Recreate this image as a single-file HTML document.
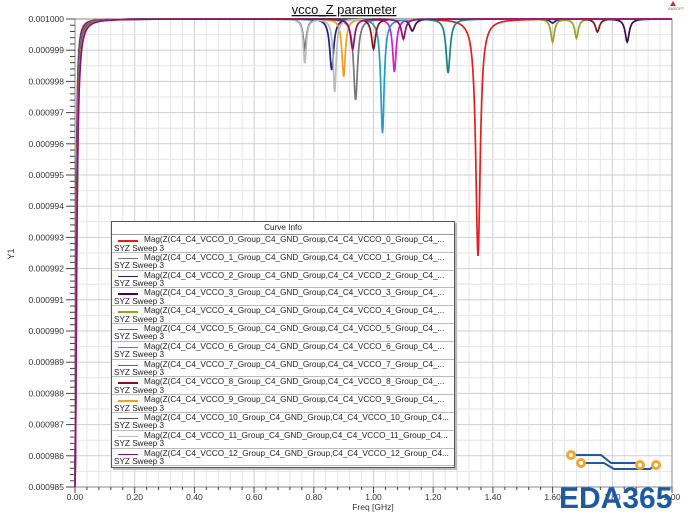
<!DOCTYPE html>
<html><head><meta charset="utf-8"><style>
body{margin:0;background:#fff;width:688px;height:516px;overflow:hidden;font-family:"Liberation Sans",Arial,sans-serif}
svg text{font-family:"Liberation Sans",Arial,sans-serif}
#leg{position:absolute;left:111px;top:221px;width:342px;height:245px;background:#fff;border:1px solid #555;box-shadow:2px 2px 0 #bbb;font-size:8.2px;color:#222}
#leg .t{text-align:center;height:12px;line-height:12px;border-bottom:1px solid #999}
#leg .r{height:17.8px;border-bottom:1px solid #bbb;position:relative;line-height:8.5px;padding-left:2px;padding-top:1px;box-sizing:border-box}
#leg .r i{position:absolute;left:6px;top:5px;width:20px;height:1.5px}
#leg .r span{margin-left:30px;display:block;white-space:nowrap}
</style></head><body>
<svg id="s" width="688" height="516" style="position:absolute;left:0;top:0">
<g id="grid"></g>
<text x="344" y="14" text-anchor="middle" font-size="13" fill="#111" text-decoration="underline">vcco_Z parameter</text>
<text x="668" y="10" font-size="4" fill="#666">ANSOFT</text>
<polygon points="670,6 673,1 676,6" fill="#b33"/>
<text x="14" y="254" font-size="9" fill="#333" transform="rotate(-90 14 254)" text-anchor="middle">Y1</text>
<text x="373" y="510" font-size="8.5" fill="#333" text-anchor="middle">Freq [GHz]</text>
<g id="curves" fill="none" stroke-width="1.7"></g>
</svg>
<div id="leg"><div class="t">Curve Info</div></div>
<svg width="688" height="516" style="position:absolute;left:0;top:0">
<g stroke="#1d5aa0" stroke-width="2" fill="none">
<polyline points="571,455 601,455 611,463 641,463"/>
<polyline points="581,463 604,463 614,469 650,469 655,465"/>
</g>
<g fill="#f4a532"><circle cx="571" cy="455" r="5"/><circle cx="581" cy="463" r="5"/><circle cx="640" cy="465" r="5"/><circle cx="656" cy="465" r="5"/></g>
<g fill="#fff"><circle cx="571" cy="455" r="2"/><circle cx="581" cy="463" r="2"/><circle cx="640" cy="465" r="2"/><circle cx="656" cy="465" r="2"/></g>
<text x="559" y="508" font-size="30" font-weight="bold" fill="#1d5aa0" style="font-family:'Liberation Sans',sans-serif">EDA365</text>
</svg>
<script>
var L=75,R=672,T=19,B=487;
var g=document.getElementById('grid'),h='';
for(var i=0;i<=50;i++){var x=L+(R-L)*i/50;h+='<line x1="'+x+'" y1="'+T+'" x2="'+x+'" y2="'+B+'" stroke="'+(i%5?'#e6e6e6':'#cfcfcf')+'"/>';}
for(var i=0;i<=30;i++){var y=T+(B-T)*i/30;h+='<line x1="'+L+'" y1="'+y+'" x2="'+R+'" y2="'+y+'" stroke="'+(i%2?'#e6e6e6':'#cfcfcf')+'"/>';}
h+='<rect x="'+L+'" y="'+T+'" width="'+(R-L)+'" height="'+(B-T)+'" fill="none" stroke="#888"/>';
for(var i=0;i<=15;i++){var y=T+(B-T)*i/15;var v=(1000-i)/1e6;h+='<text x="64" y="'+(y+3)+'" font-size="8.5" fill="#333" text-anchor="end">'+v.toFixed(6)+'</text><line x1="66" y1="'+y+'" x2="'+L+'" y2="'+y+'" stroke="#444"/>';
 if(i<15)for(var k=1;k<5;k++){var yy=y+(B-T)/15*k/5;h+='<line x1="70" y1="'+yy+'" x2="'+L+'" y2="'+yy+'" stroke="#444"/>';}}
for(var i=0;i<=10;i++){var x=L+(R-L)*i/10;h+='<text x="'+x+'" y="500" font-size="8.5" fill="#333" text-anchor="middle">'+(i*0.2).toFixed(2)+'</text><line x1="'+x+'" y1="'+B+'" x2="'+x+'" y2="'+(B+6)+'" stroke="#444"/>';
 if(i<10)for(var k=1;k<5;k++){var xx=x+(R-L)/10*k/5;h+='<line x1="'+xx+'" y1="'+B+'" x2="'+xx+'" y2="'+(B+3)+'" stroke="#444"/>';}}
g.innerHTML=h;
var cols=['#e02020','#777777','#1a237e','#3a0a4a','#a0a020','#d020c0','#20a0c0','#208080','#801818','#f0a020','#555555','#bbbbbb','#901070'];
var dips=[[[1.35,237,0.009]],[[0.94,81,0.008]],[[0.86,51,0.008],[1.60,4,0.01]],[[1.85,23,0.008],[1.13,12,0.01]],[[1.60,23,0.007],[1.68,19,0.007]],[[1.07,53,0.007]],[[1.03,114,0.007]],[[1.25,54,0.008]],[[1.75,13,0.008],[1.00,30,0.008]],[[0.90,58,0.007]],[[0.77,30,0.007]],[[0.77,44,0.006],[0.87,73,0.006]],[[0.93,30,0.008],[1.10,20,0.008]]];
var c=document.getElementById('curves'),ch='';
for(var j=0;j<13;j++){var d='';for(var p=0;p<=1200;p++){var f=p/600;var y=T+(B-T)/(1+Math.pow(f/(0.0035+j*0.0002),2));
 dips[j].forEach(function(q){var w=q[2];y+=q[1]*w*w/((f-q[0])*(f-q[0])+w*w);});
 y=Math.min(y,B);var x=L+(R-L)*f/2;d+=(p?'L':'M')+x.toFixed(1)+' '+y.toFixed(1);}
 ch+='<path d="'+d+'" stroke="'+cols[j]+'"/>';}
c.innerHTML=ch;
var lg=document.getElementById('leg'),lh='';
for(var j=0;j<13;j++){var n=j<10?'C4_C4_VCCO_'+j+'_Group_C4_GND_Group,C4_C4_VCCO_'+j+'_Group_C4_...':'C4_C4_VCCO_'+j+'_Group_C4_GND_Group,C4_C4_VCCO_'+j+'_Group_C4...';
 lh+='<div class="r"><i style="background:'+cols[j]+'"></i><span>Mag(Z('+n+'</span>SYZ Sweep 3</div>';}
lg.innerHTML+=lh;
</script>
</body></html>
